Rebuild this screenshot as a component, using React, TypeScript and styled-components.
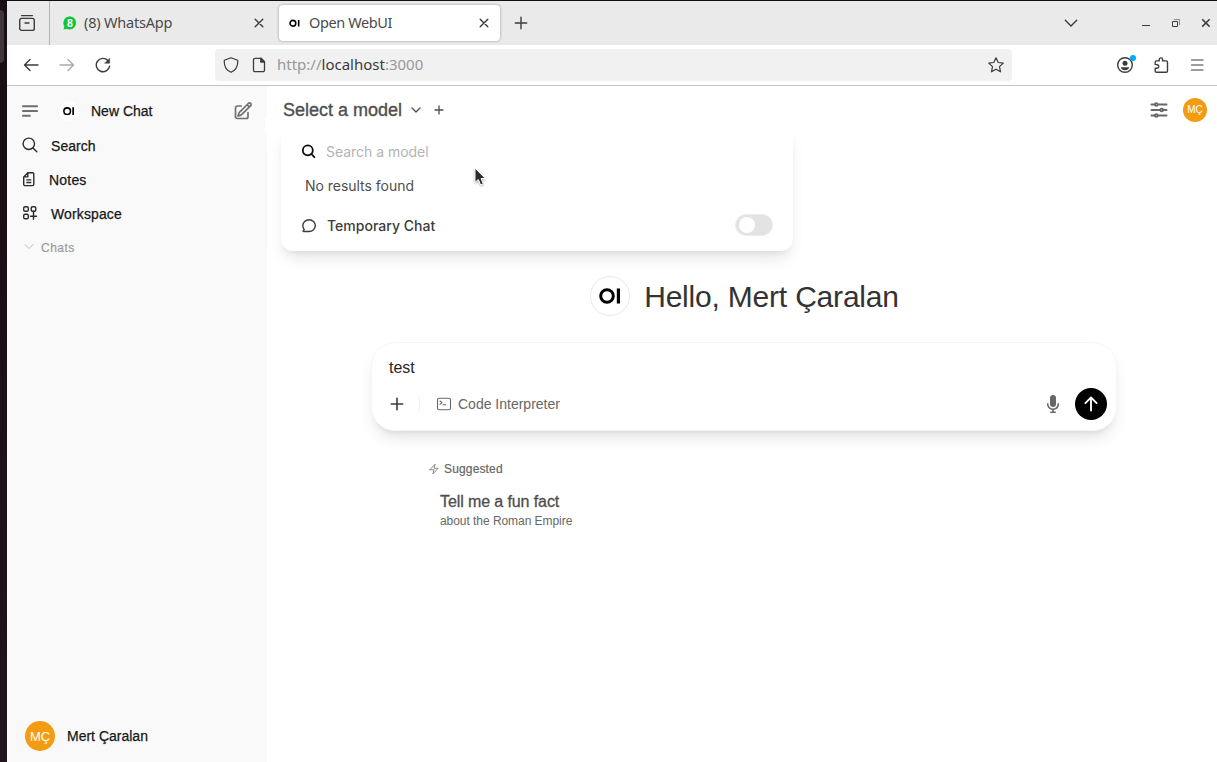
import React from "react";
import styled, { createGlobalStyle } from "styled-components";

const GlobalStyle = createGlobalStyle`
  * { box-sizing: border-box; }
  body { margin: 0; background: #fff; overflow: hidden; }
  svg { display: block; flex: none; }
`;

const sans = `"Liberation Sans", Arial, sans-serif`;
const chrome = `"Noto Sans", "Open Sans", sans-serif`;

/* ---------- shell ---------- */

const Screen = styled.div`
  display: flex;
  width: 1217px;
  height: 762px;
  font-family: ${sans};
`;
const Dock = styled.div`
  width: 7px;
  flex: none;
  padding-top: 10px;
  background: linear-gradient(#180f14 0, #1a0d14 200px, #23141e 100%);
`;
const DockItem = styled.div`
  width: 4px;
  height: 53px;
  border-radius: 0 5px 5px 0;
  background: #40373d;
`;
const Browser = styled.div`
  flex: 1;
  min-width: 0;
  display: flex;
  flex-direction: column;
  border-top: 1px solid #140d12;
`;

/* ---------- browser chrome ---------- */

const TabBar = styled.div`
  height: 44px;
  flex: none;
  display: flex;
  align-items: center;
  background: #eaeaea;
  color: #3c3c3c;
`;
const TabOverview = styled.div`
  width: 43px;
  height: 44px;
  display: grid;
  place-items: center;
  padding-right: 3px;
  border-right: 1px solid #b3b3b3;
`;
const Tab = styled.div<{ $active?: boolean }>`
  display: flex;
  align-items: center;
  width: ${(p) => (p.$active ? 221 : 229)}px;
  height: 36px;
  padding: 0 ${(p) => (p.$active ? 8 : 12)}px 0 ${(p) => (p.$active ? 9 : 12)}px;
  border-radius: 4px;
  background: ${(p) => (p.$active ? "#fff" : "transparent")};
  box-shadow: ${(p) => (p.$active ? "0 0 3px rgba(0,0,0,.35)" : "none")};
`;
const TabTitle = styled.span<{ $gap: number; $track: number }>`
  flex: 1;
  margin: -2px 0 0 ${(p) => p.$gap}px;
  font: 14.5px/20px ${chrome};
  letter-spacing: ${(p) => p.$track}px;
  color: #4a4a4a;
  white-space: nowrap;
`;
const NewTab = styled.div`
  margin-left: 14px;
`;
const WindowControls = styled.div`
  display: flex;
  align-items: center;
  margin-left: auto;
  padding-right: 6px;
`;
const ListTabs = styled.div`
  margin-right: 62px;
`;
const Controls = styled.div`
  display: flex;
  gap: 20px;
`;
const Toolbar = styled.div`
  height: 41px;
  flex: none;
  display: flex;
  align-items: center;
  padding: 0 12px 0 16px;
  border-bottom: 1px solid #c4c4c4;
  background: #fff;
  color: #3c3c3c;
`;
const ToolGroup = styled.div`
  display: flex;
  gap: 20px;
`;
const UrlBar = styled.div`
  display: flex;
  align-items: center;
  width: 797px;
  height: 32px;
  margin: 0 105px 0 104px;
  padding: 0 8px;
  border-radius: 4px;
  background: #f1f1f1;
`;
const UrlIcons = styled.div`
  display: flex;
  gap: 12px;
`;
const Url = styled.span`
  flex: 1;
  margin: -2px 0 0 10px;
  font: 15px/20px ${chrome};
  color: #989898;
  b { font-weight: 400; color: #3b3b3b; }
`;

/* ---------- application ---------- */

const AppArea = styled.div`
  flex: 1;
  display: flex;
  min-height: 0;
`;
const Sidebar = styled.nav`
  width: 260px;
  flex: none;
  display: flex;
  flex-direction: column;
  background: #f9f9f9;
`;
const SideHeader = styled.div`
  display: flex;
  align-items: center;
  height: 50px;
  padding: 0 14px 0 13px;
  color: #6f6f6f;
`;
const Brand = styled.div`
  display: flex;
  align-items: center;
  flex: 1;
  gap: 12px;
  margin-left: 19px;
`;
const LogoDisc = styled.div<{ $size: number; $ring?: boolean }>`
  width: ${(p) => p.$size}px;
  height: ${(p) => p.$size}px;
  display: grid;
  place-items: center;
  border-radius: 50%;
  background: #fff;
  border: ${(p) => (p.$ring ? "1px solid #e9e9e9" : "none")};
`;
const Label = styled.span<{ $track?: number; $size?: number; $color?: string; $heavy?: number }>`
  font-size: ${(p) => p.$size ?? 14}px;
  line-height: 20px;
  letter-spacing: ${(p) => p.$track ?? 0}px;
  color: ${(p) => p.$color ?? "#171717"};
  -webkit-text-stroke: ${(p) => p.$heavy ?? 0.25}px currentColor;
  white-space: nowrap;
`;
const SideList = styled.div`
  margin-top: -7px;
`;
const SideItem = styled.div`
  display: flex;
  align-items: center;
  gap: 13px;
  height: 34px;
  padding-left: 15px;
  color: #2b2b2b;
  svg { margin-top: -2px; }
`;
const SectionTitle = styled.div`
  display: flex;
  align-items: center;
  gap: 6px;
  height: 20px;
  margin-top: 7px;
  padding-left: 16px;
  color: #bdbdbd;
  svg { margin-top: -2px; }
`;
const Account = styled.div`
  display: flex;
  align-items: center;
  gap: 12px;
  margin-top: auto;
  padding: 0 18px 11px;
`;
const Avatar = styled.div<{ $size: number; $font: number }>`
  width: ${(p) => p.$size}px;
  height: ${(p) => p.$size}px;
  display: grid;
  place-items: center;
  flex: none;
  border-radius: 50%;
  background: #f39c12;
  color: #fff;
  font-size: ${(p) => p.$font}px;
  line-height: 1;
`;
const Main = styled.main`
  flex: 1;
  min-width: 0;
  display: flex;
  flex-direction: column;
  position: relative;
  background: #fff;
`;
const MainHeader = styled.header`
  display: flex;
  align-items: center;
  height: 48px;
  flex: none;
  padding: 0 10px 0 16px;
  color: #4e4e4e;
`;
const ModelActions = styled.div`
  display: flex;
  gap: 11px;
  margin-left: 8px;
`;
const HeaderActions = styled.div`
  display: flex;
  align-items: center;
  gap: 13px;
  margin-left: auto;
  color: #676767;
`;
const Center = styled.section`
  width: 746px;
  margin: 142px 0 0 104px;
`;
const Greeting = styled.div`
  display: flex;
  align-items: center;
  justify-content: center;
  gap: 14px;
  height: 40px;
  padding-left: 1px;
`;
const Hello = styled.h1`
  margin: 2px 0 0;
  font-size: 30px;
  font-weight: 400;
  line-height: 40px;
  letter-spacing: -0.2px;
  color: #333;
  white-space: nowrap;
`;
const Composer = styled.div`
  display: flex;
  flex-direction: column;
  height: 89px;
  margin-top: 26px;
  padding: 15px 9px 10px 17px;
  border: 1px solid #f7f7f7;
  border-radius: 24px;
  background: #fff;
  box-shadow: 0 10px 15px -3px rgba(0,0,0,.1), 0 4px 6px -4px rgba(0,0,0,.1);
`;
const ComposerText = styled.div`
  height: 20px;
  font-size: 16px;
  line-height: 20px;
  color: #262626;
`;
const ComposerRow = styled.div`
  display: flex;
  align-items: center;
  height: 32px;
  margin-top: 10px;
  color: #3c3c3c;
`;
const Divider = styled.i`
  width: 1px;
  height: 16px;
  margin: 0 16px 0 14px;
  background: #f0f0f0;
`;
const Tool = styled.div`
  display: flex;
  align-items: center;
  gap: 6px;
  flex: 1;
  color: #676767;
`;
const SendButton = styled.div`
  width: 32px;
  height: 32px;
  display: grid;
  place-items: center;
  margin-left: 12px;
  border-radius: 50%;
  background: #000;
  color: #fff;
`;
const Suggested = styled.div`
  display: flex;
  align-items: center;
  gap: 4px;
  margin: 28px 0 0 57px;
  color: #8a8a8a;
`;
const Prompt = styled.div`
  display: flex;
  flex-direction: column;
  margin: 13px 0 0 69px;
  ${Label} + ${Label} { margin-top: -1px; }
`;

/* ---------- model menu ---------- */

const Menu = styled.div`
  position: absolute;
  left: 14px;
  top: 40px;
  width: 512px;
  height: 125px;
  display: flex;
  flex-direction: column;
  padding: 12px 20px 0;
  border-radius: 12px;
  background: #fff;
  box-shadow: 0 10px 15px -3px rgba(0,0,0,.1), 0 4px 6px -4px rgba(0,0,0,.1);
  font-family: Inter, sans-serif;
  &::before {
    content: "";
    position: absolute;
    left: -16px;
    right: -16px;
    top: -8px;
    height: 20px;
    background: linear-gradient(#fff 50%, rgba(255,255,255,0));
  }
`;
const MenuRow = styled.div<{ $gap: number }>`
  display: flex;
  align-items: center;
  gap: ${(p) => p.$gap}px;
  height: 28px;
  color: #3c3c3c;
`;
const MenuText = styled.span<{ $color: string; $weight?: number; $track: number }>`
  flex: 1;
  font-size: 14px;
  line-height: 20px;
  font-weight: ${(p) => p.$weight ?? 400};
  letter-spacing: ${(p) => p.$track}px;
  color: ${(p) => p.$color};
`;
const EmptyRow = styled.div`
  display: flex;
  height: 20px;
  margin: 10px 0 16px 4px;
`;
const Switch = styled.div`
  width: 38px;
  height: 22px;
  padding: 3px 2px;
  margin-top: -3px;
  border-radius: 11px;
  background: #e3e3e3;
  border: 1px solid #ececec;
`;
const Knob = styled.div`
  width: 16px;
  height: 16px;
  border-radius: 50%;
  background: #fff;
  margin: -1px 0 0 1px;
`;
const Pointer = styled.div`
  position: absolute;
  left: 206px;
  top: 80px;
  filter: drop-shadow(0 1px 1px rgba(0,0,0,.3));
`;

/* ---------- icons ---------- */

type IconProps = { size?: number; box?: number; w?: number; children: React.ReactNode };
const Icon = ({ size = 16, box = 16, w = 1.2, children }: IconProps) => (
  <svg width={size} height={size} viewBox={`0 0 ${box} ${box}`} fill="none" stroke="currentColor"
    strokeWidth={w} strokeLinecap="round" strokeLinejoin="round">{children}</svg>
);
const OiMark = ({ width }: { width: number }) => (
  <svg width={width} height={(width * 16) / 22} viewBox="0 0 22 16">
    <circle cx="8" cy="8" r="6.3" fill="none" stroke="#000" strokeWidth="3" />
    <rect x="17.8" y="0.5" width="3.2" height="15" fill="#000" />
  </svg>
);
const Cross = () => <Icon w={1.4}><path d="M4.2 4.2l7.6 7.6M11.8 4.2l-7.6 7.6" /></Icon>;

const Chrome = () => (
  <>
    <TabBar>
      <TabOverview>
        <Icon size={18} box={18} w={1.4}>
          <path d="M3.6 1.6h10.8" />
          <rect x="1.7" y="4.4" width="14.6" height="12" rx="2" />
          <path d="M7 9h4" />
        </Icon>
      </TabOverview>
      <Tab>
        <svg width="16" height="16" viewBox="0 0 16 16">
          <path d="M8 .9a7 7 0 1 1-3.3 13.4L.9 15l1-3.6A7 7 0 0 1 8 .9z" fill="#14c33d" stroke="#fff" strokeWidth=".6" />
          <text x="8" y="11.6" textAnchor="middle" fontFamily="Liberation Sans" fontWeight="700" fontSize="10.5" fill="#fff">8</text>
        </svg>
        <TabTitle $gap={6} $track={-0.2}>(8) WhatsApp</TabTitle>
        <Cross />
      </Tab>
      <Tab $active>
        <Icon size={14}>
          <g stroke="#000" strokeWidth="1.8" transform="translate(1.6 3.8)">
            <circle cx="4" cy="4.5" r="3.3" />
            <path d="M10.6 .8v7.4" strokeLinecap="butt" />
          </g>
        </Icon>
        <TabTitle $gap={7} $track={-0.4}>Open WebUI</TabTitle>
        <Cross />
      </Tab>
      <NewTab><Icon size={14} box={14} w={1.4}><path d="M7 1.3v11.4M1.3 7h11.4" /></Icon></NewTab>
      <WindowControls>
        <ListTabs><Icon w={1.4}><path d="M2.3 5.3L8 11l5.7-5.7" /></Icon></ListTabs>
        <Controls>
          <svg width="10" height="12" viewBox="0 0 10 12"><path d="M1 8.5h8" stroke="#3c3c3c" /></svg>
          <svg width="10" height="12" viewBox="0 0 10 12" fill="none" stroke="#3c3c3c"><path d="M1.5 4.5h5v5h-5z" /><path d="M3 2.5h5.5V8" stroke="#8a8a8a" /></svg>
          <svg width="10" height="12" viewBox="0 0 10 12" stroke="#3c3c3c" strokeWidth="1.5"><path d="M1.2 2.2l7.4 7.4M8.6 2.2L1.2 9.6" /></svg>
        </Controls>
      </WindowControls>
    </TabBar>
    <Toolbar>
      <ToolGroup>
        <Icon w={1.4}><path d="M15 8H1.8M7 2.5L1.5 8 7 13.5" /></Icon>
        <Icon w={1.4}><path stroke="#aaa" d="M1 8h13.2M9 2.500L14.500 8 9 13.500" /></Icon>
        <Icon w={1.4}><path d="M14.600 9.100A6.700 6.700 0 1 1 12.900 3.500" /><path d="M14.600 1.400v4.800H9.800z" fill="currentColor" strokeWidth=".5" /></Icon>
      </ToolGroup>
      <UrlBar>
        <UrlIcons>
          <Icon><path d="M8 .7l6.700 2.600c.4 5.200-1 9.500-6.700 12C2.300 12.800.9 8.500 1.300 3.300z" /></Icon>
          <Icon w={1.3}><path d="M10 1.300H4A1.500 1.500 0 0 0 2.500 2.800v10.400A1.500 1.500 0 0 0 4 14.700h8a1.500 1.500 0 0 0 1.500-1.500V4.800z" /><path d="M9.800 1.300v3.700h3.700z" fill="currentColor" /></Icon>
        </UrlIcons>
        <Url>http://<b>localhost</b>:3000</Url>
        <Icon><path d="M8 .8l2.200 4.700 5.100.6-3.800 3.500 1 5.200L8 12.200l-4.500 2.600 1-5.200L.7 6.100l5.100-.6z" /></Icon>
      </UrlBar>
      <ToolGroup>
        <svg width="16" height="16" viewBox="0 0 16 16" overflow="visible">
          <circle cx="8" cy="8" r="7.300" fill="none" stroke="#3c3c3c" strokeWidth="1.400" />
          <circle cx="8" cy="6.300" r="2.500" fill="#3c3c3c" />
          <path d="M3.800 10.200h8.400c-.4 2-2.200 3-4.200 3s-3.800-1-4.200-3z" fill="#3c3c3c" />
          <circle cx="16" cy="1" r="3" fill="#00a8ff" />
        </svg>
        <Icon w={1.4}><path d="M2.200 7.400V5.200c0-.8.5-1.300 1.300-1.300h2.700V2.600a1.700 1.700 0 0 1 3.400 0v1.300h3.600c.8 0 1.300.5 1.300 1.300v8.700c0 .8-.5 1.300-1.300 1.300H3.500c-.8 0-1.300-.5-1.300-1.300v-2.700h1.900a1.700 1.700 0 0 0 0-3.400z" /></Icon>
        <Icon w={1.2}><path d="M2.500 3.500h11.500M2.500 8.500h11.500M2.500 13.500h11.500" transform="translate(0 -.5)" /></Icon>
      </ToolGroup>
    </Toolbar>
  </>
);

const Side = () => (
  <Sidebar>
    <SideHeader>
      <Icon size={20} box={20} w={1.9}><path d="M2.900 5.300h14.200M2.900 10h14.200M2.900 14.700h7" /></Icon>
      <Brand>
        <LogoDisc $size={20}><OiMark width={11.5} /></LogoDisc>
        <Label>New Chat</Label>
      </Brand>
      <Icon size={20} box={24} w={2}><path d="m16.862 4.487 1.687-1.688a1.875 1.875 0 1 1 2.652 2.652L10.582 16.070a4.500 4.500 0 0 1-1.897 1.130L6 18l.8-2.685a4.500 4.500 0 0 1 1.130-1.897l8.932-8.931Zm0 0L19.500 7.125M18 14v4.750A2.250 2.250 0 0 1 15.750 21H5.250A2.250 2.250 0 0 1 3 18.750V8.250A2.250 2.250 0 0 1 5.250 6H10" /></Icon>
    </SideHeader>
    <SideList>
      <SideItem>
        <Icon w={1.4}><circle cx="6.800" cy="6.800" r="5.700" /><path d="M11 11l3.800 3.800" /></Icon>
        <Label $track={0.05}>Search</Label>
      </SideItem>
      <SideItem>
        <svg width="14" height="16" viewBox="0 0 14 16" fill="none" stroke="currentColor" strokeWidth="1.4" strokeLinejoin="round"><path d="M5.800 1.800h4.700a1.300 1.300 0 0 1 1.300 1.300v10.200a1.300 1.300 0 0 1-1.300 1.300H3a1.300 1.300 0 0 1-1.300-1.300V5.900zM5.800 1.800v4.100H1.700M4.300 8.900h5M4.300 11.500h5" /></svg>
        <Label $track={0.2}>Notes</Label>
      </SideItem>
      <SideItem>
        <Icon w={1.4}><rect x="1.700" y="1.700" width="4.600" height="4.600" rx="1.400" /><rect x="9.200" y="1.700" width="4.600" height="4.600" rx="1.400" /><rect x="1.700" y="9.200" width="4.600" height="4.600" rx="1.400" /><path d="M11.500 6.300v8M8.500 11.300h6" /></Icon>
        <Label $track={0.12}>Workspace</Label>
      </SideItem>
    </SideList>
    <SectionTitle>
      <Icon size={12} box={12} w={1}><path d="M2 3.500l4 4 4-4" /></Icon>
      <Label $size={12} $track={0.5} $color="#9b9b9b" $heavy={0.2}>Chats</Label>
    </SectionTitle>
    <Account>
      <Avatar $size={30} $font={13}>MÇ</Avatar>
      <Label>Mert Çaralan</Label>
    </Account>
  </Sidebar>
);

const ModelMenu = () => (
  <Menu>
    <MenuRow $gap={9}>
      <Icon w={1.8}><g stroke="#0d0d0d"><circle cx="6.800" cy="6.300" r="5" /><path d="M10.400 10l3 3.200" /></g></Icon>
      <MenuText $color="#b4b4b4" $track={-0.03}>Search a model</MenuText>
    </MenuRow>
    <EmptyRow><MenuText $color="#4e4e4e" $track={-0.03}>No results found</MenuText></EmptyRow>
    <MenuRow $gap={10}>
      <Icon w={1.4}><path d="M8.100 1.800c3.600 0 6.200 2.600 6.200 5.800s-2.600 5.900-6.200 5.900H2.700c-.5 0-.7-.4-.4-.8l.9-1.200C2.200 10.400 1.800 9.200 1.800 7.600c0-3.200 2.700-5.800 6.300-5.800z" /></Icon>
      <MenuText $color="#3c3c3c" $weight={500} $track={0.02}>Temporary Chat</MenuText>
      <Switch><Knob /></Switch>
    </MenuRow>
  </Menu>
);

export default function App() {
  return (
    <Screen>
      <GlobalStyle />
      <Dock><DockItem /></Dock>
      <Browser>
        <Chrome />
        <AppArea>
          <Side />
          <Main>
            <MainHeader>
              <Label $size={18} $color="#4e4e4e" $heavy={0.35}>Select a model</Label>
              <ModelActions>
                <Icon size={12} box={12} w={1.3}><path d="M2 4l4 4 4-4" /></Icon>
                <Icon size={12} box={12} w={1.3}><path d="M6 2v8M2 6h8" /></Icon>
              </ModelActions>
              <HeaderActions>
                <Icon size={22} box={24} w={2}><path d="M10.500 6h9.750M10.500 6a1.500 1.500 0 1 1-3 0m3 0a1.500 1.500 0 1 0-3 0M3.750 6H7.500m3 12h9.750m-9.750 0a1.500 1.500 0 0 1-3 0m3 0a1.500 1.500 0 0 0-3 0m-3.750 0H7.500m9-6h3.750m-3.750 0a1.500 1.500 0 0 1-3 0m3 0a1.500 1.500 0 0 0-3 0m-9.750 0h9.750" /></Icon>
                <Avatar $size={24} $font={10}>MÇ</Avatar>
              </HeaderActions>
            </MainHeader>
            <Center>
              <Greeting>
                <LogoDisc $size={40} $ring><OiMark width={22} /></LogoDisc>
                <Hello>Hello, Mert Çaralan</Hello>
              </Greeting>
              <Composer>
                <ComposerText>test</ComposerText>
                <ComposerRow>
                  <Icon w={1.6}><path d="M8 2.300v11.400M2.300 8h11.400" /></Icon>
                  <Divider />
                  <Tool>
                    <Icon w={1.1}><rect x="1.500" y="2.200" width="13" height="11.600" rx="1.800" /><path d="M4 5l2 1.700-2 1.700M7 8.700h2.500" /></Icon>
                    <Label $color="#676767" $heavy={0}>Code Interpreter</Label>
                  </Tool>
                  <svg width="20" height="20" viewBox="0 0 20 20" fill="#676767"><path d="M7 4a3 3 0 0 1 6 0v6a3 3 0 1 1-6 0V4Z" /><path d="M5.500 9.643a.75.75 0 0 0-1.500 0V10c0 3.060 2.290 5.585 5.250 5.954V17.500h-1.500a.75.75 0 0 0 0 1.500h4.500a.75.75 0 0 0 0-1.500h-1.500v-1.546A6.001 6.001 0 0 0 16 10v-.357a.75.75 0 0 0-1.500 0V10a4.500 4.500 0 0 1-9 0v-.357Z" /></svg>
                  <SendButton>
                    <svg width="20" height="20" viewBox="0 0 16 16" fill="currentColor"><path d="M8 14a.75.75 0 0 1-.75-.75V4.560L4.030 7.780a.75.75 0 0 1-1.060-1.060l4.500-4.500a.75.75 0 0 1 1.060 0l4.500 4.500a.75.75 0 0 1-1.060 1.060L8.750 4.560v8.690A.75.75 0 0 1 8 14Z" /></svg>
                  </SendButton>
                </ComposerRow>
              </Composer>
              <Suggested>
                <Icon size={12} box={24} w={2}><path d="m3.750 13.500 10.500-11.250L12 10.500h8.250L9.750 21.750 12 13.500H3.750Z" /></Icon>
                <Label $size={12} $color="#676767" $heavy={0.2} $track={0.15}>Suggested</Label>
              </Suggested>
              <Prompt>
                <Label $size={16} $color="#4e4e4e" $heavy={0.3} $track={-0.1}>Tell me a fun fact</Label>
                <Label $size={12} $color="#676767" $heavy={0} $track={-0.05}>about the Roman Empire</Label>
              </Prompt>
            </Center>
            <ModelMenu />
            <Pointer>
              <svg width="14" height="22" viewBox="0 0 14 22"><path d="M2 2v14.500l3.300-3 2.400 5.500 2.600-1.100L8 12.500h4.300z" fill="#2b2b2b" stroke="#fff" strokeWidth="1" /></svg>
            </Pointer>
          </Main>
        </AppArea>
      </Browser>
    </Screen>
  );
}
